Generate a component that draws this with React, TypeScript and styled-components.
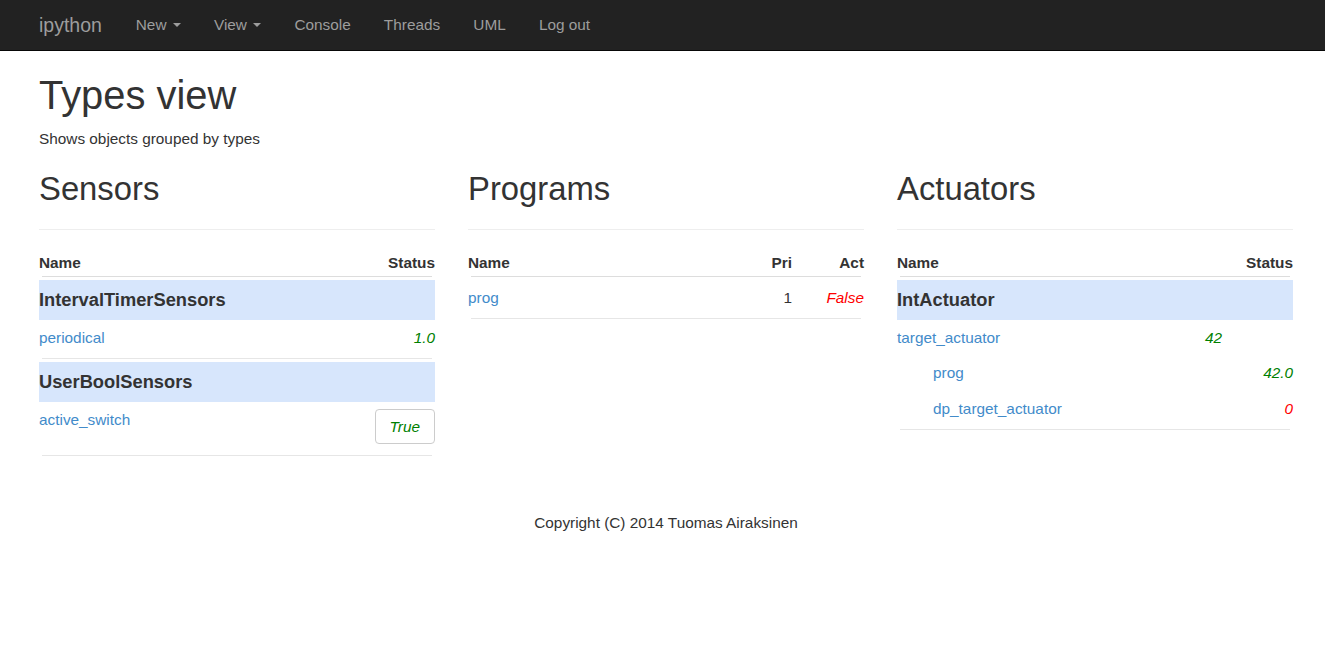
import React from "react";
import styled, { createGlobalStyle } from "styled-components";

const GlobalStyle = createGlobalStyle`
  html, body {
    margin: 0;
    padding: 0;
    background: #fff;
  }
  body {
    font-family: "Liberation Sans", Arial, Helvetica, sans-serif;
    font-size: 15.35px;
    line-height: 20px;
    color: #333;
  }
  * { box-sizing: border-box; }
`;

const NavBar = styled.nav`
  height: 51px;
  background: #222;
  border-bottom: 1px solid #080808;
  display: flex;
  align-items: center;
  padding: 0 0 1px 39px;
`;

const Brand = styled.a`
  font-size: 19.5px;
  line-height: 20px;
  color: #9d9d9d;
  padding-right: 17.3px;
  text-decoration: none;
`;

const NavList = styled.ul`
  display: flex;
  list-style: none;
  margin: 0;
  padding: 0;
`;

const NavLink = styled.a`
  display: flex;
  align-items: center;
  padding: 0 16.6px;
  color: #9d9d9d;
  text-decoration: none;
  line-height: 20px;
  white-space: pre;
`;

const Caret = styled.span`
  display: inline-block;
  width: 0;
  height: 0;
  margin-left: 2px;
  border-top: 4px solid #9d9d9d;
  border-left: 4px solid transparent;
  border-right: 4px solid transparent;
`;

const Main = styled.main`
  padding: 0 32px 0 39px;
`;

const PageTitle = styled.h1`
  margin: 23px 0 11px;
  font-size: 39.9px;
  line-height: 43px;
  font-weight: 500;
`;

const Lead = styled.p`
  margin: 0;
  line-height: 22px;
`;

const Columns = styled.div`
  display: grid;
  grid-template-columns: repeat(3, 396px);
  column-gap: 33px;
  align-items: start;
  margin-top: 21px;
`;

const Panel = styled.section`
  display: flex;
  flex-direction: column;
`;

const PanelTitle = styled.h2`
  margin: 0;
  font-size: 32.8px;
  line-height: 36px;
  font-weight: 500;
`;

const Rule = styled.hr`
  margin: 22px 0 23px;
  border: 0;
  border-top: 1px solid #eee;
  height: 0;
`;

const HeadRow = styled.div<{ $cols: string }>`
  display: grid;
  grid-template-columns: ${(p) => p.$cols};
  padding-bottom: 3px;
  font-weight: bold;
`;

const Cell = styled.div<{ $right?: boolean }>`
  text-align: ${(p) => (p.$right ? "right" : "left")};
  white-space: nowrap;
`;

const Divider = styled.div<{ $head?: boolean }>`
  height: 1px;
  margin: 0 3px 3px;
  background: ${(p) => (p.$head ? "#dddddd" : "#e6e6e6")};
`;

const GroupRow = styled.div`
  height: 40px;
  display: flex;
  align-items: center;
  background: #d7e6fc;
  font-size: 18.3px;
  font-weight: bold;
  color: #333;
`;

const ItemRow = styled.div<{ $cols: string; $padBottom?: number }>`
  display: grid;
  grid-template-columns: ${(p) => p.$cols};
  align-items: start;
  padding: 8px 0 ${(p) => p.$padBottom ?? 10}px;
`;

const SubList = styled.div`
  padding-bottom: 3px;
`;

const SubRow = styled.div`
  display: grid;
  grid-template-columns: 1fr auto;
  padding: 9px 0 7px 36px;
`;

const Link = styled.a`
  color: #428bca;
  text-decoration: none;
  white-space: nowrap;
`;

const Value = styled.span<{ $tone: "ok" | "bad" | "plain" }>`
  text-align: right;
  font-style: ${(p) => (p.$tone === "plain" ? "normal" : "italic")};
  color: ${(p) =>
    p.$tone === "ok" ? "#008000" : p.$tone === "bad" ? "#ff0000" : "#333"};
  white-space: nowrap;
`;

const ToggleButton = styled.button`
  justify-self: end;
  margin: -1px 0 1px;
  font-family: inherit;
  font-size: inherit;
  font-style: italic;
  line-height: 20px;
  color: #008000;
  background: #fff;
  border: 1px solid #ccc;
  border-radius: 4px;
  padding: 7px 14px 6px;
  cursor: pointer;
`;

const Footer = styled.footer`
  margin-top: 54px;
  text-align: center;
  line-height: 20px;
`;

export default function App() {
  return (
    <>
      <GlobalStyle />
      <NavBar>
        <Brand href="#">ipython</Brand>
        <NavList>
          <li>
            <NavLink href="#">
              New <Caret />
            </NavLink>
          </li>
          <li>
            <NavLink href="#">
              View <Caret />
            </NavLink>
          </li>
          <li>
            <NavLink href="#">Console</NavLink>
          </li>
          <li>
            <NavLink href="#">Threads</NavLink>
          </li>
          <li>
            <NavLink href="#">UML</NavLink>
          </li>
          <li>
            <NavLink href="#">Log out</NavLink>
          </li>
        </NavList>
      </NavBar>
      <Main>
        <PageTitle>Types view</PageTitle>
        <Lead>Shows objects grouped by types</Lead>
        <Columns>
          <Panel>
            <PanelTitle>Sensors</PanelTitle>
            <Rule />
            <HeadRow $cols="1fr auto">
              <Cell>Name</Cell>
              <Cell $right>Status</Cell>
            </HeadRow>
            <Divider $head />
            <GroupRow>IntervalTimerSensors</GroupRow>
            <ItemRow $cols="1fr auto">
              <Link href="#">periodical</Link>
              <Value $tone="ok">1.0</Value>
            </ItemRow>
            <Divider />
            <GroupRow>UserBoolSensors</GroupRow>
            <ItemRow $cols="1fr auto">
              <Link href="#">active_switch</Link>
              <ToggleButton>True</ToggleButton>
            </ItemRow>
            <Divider />
          </Panel>
          <Panel>
            <PanelTitle>Programs</PanelTitle>
            <Rule />
            <HeadRow $cols="1fr 60px 72px">
              <Cell>Name</Cell>
              <Cell $right>Pri</Cell>
              <Cell $right>Act</Cell>
            </HeadRow>
            <Divider $head />
            <ItemRow $cols="1fr 60px 72px">
              <Link href="#">prog</Link>
              <Value $tone="plain">1</Value>
              <Value $tone="bad">False</Value>
            </ItemRow>
            <Divider />
          </Panel>
          <Panel>
            <PanelTitle>Actuators</PanelTitle>
            <Rule />
            <HeadRow $cols="1fr auto">
              <Cell>Name</Cell>
              <Cell $right>Status</Cell>
            </HeadRow>
            <Divider $head />
            <GroupRow>IntActuator</GroupRow>
            <ItemRow $cols="1fr auto 71px" $padBottom={6}>
              <Link href="#">target_actuator</Link>
              <Value $tone="ok">42</Value>
            </ItemRow>
            <SubList>
              <SubRow>
                <Link href="#">prog</Link>
                <Value $tone="ok">42.0</Value>
              </SubRow>
              <SubRow>
                <Link href="#">dp_target_actuator</Link>
                <Value $tone="bad">0</Value>
              </SubRow>
            </SubList>
            <Divider />
          </Panel>
        </Columns>
        <Footer>Copyright (C) 2014 Tuomas Airaksinen</Footer>
      </Main>
    </>
  );
}
